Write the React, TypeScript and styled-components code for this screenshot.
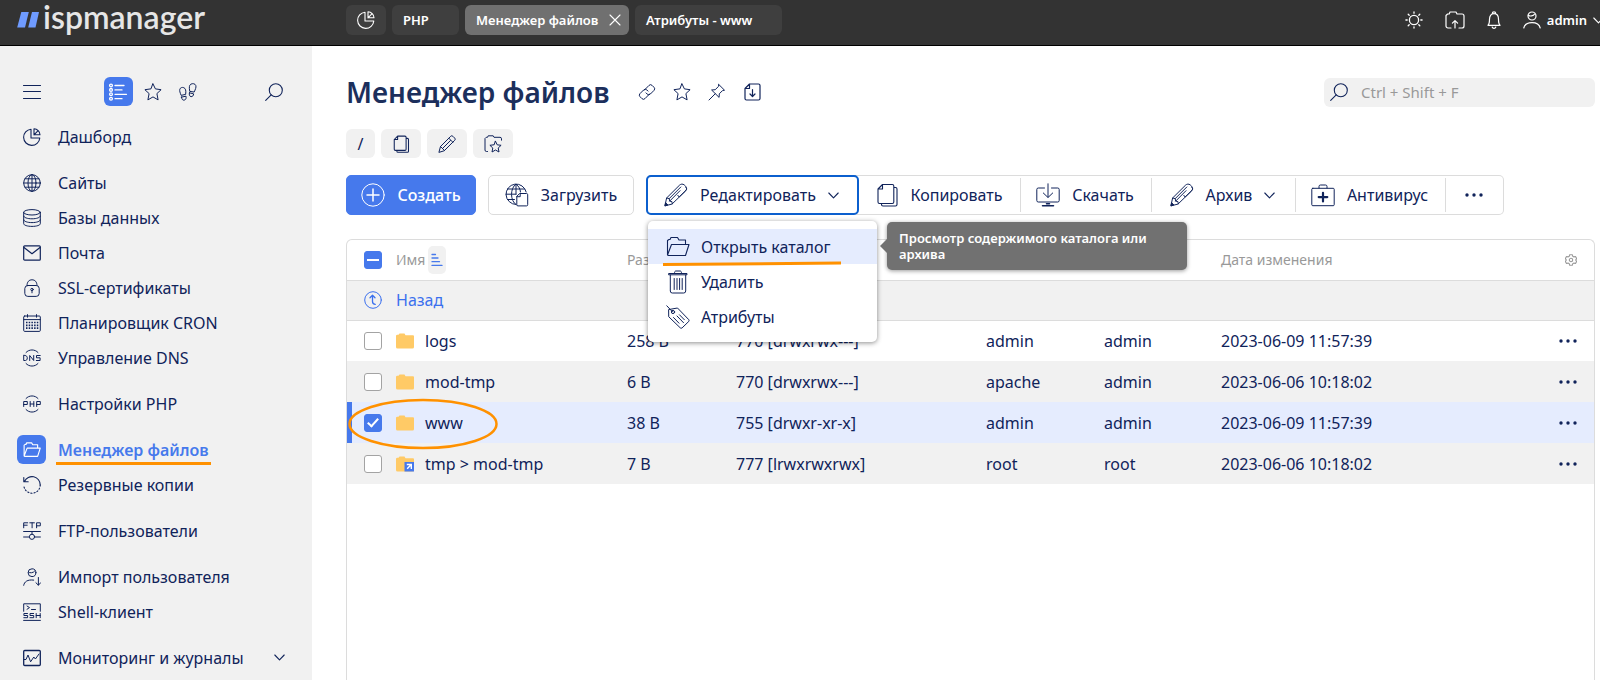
import React, { ReactNode } from "react";
import styled, { createGlobalStyle, css } from "styled-components";

const navy = "#10235a";
const blue = "#4679ec";
const orange = "#ff9100";
const line = "#dcdcdc";
const soft = "#f1f1f1";
const pale = "#e5ecfe";

const GlobalStyle = createGlobalStyle`
  *, *::before, *::after { box-sizing: border-box; }
  body {
    margin: 0;
    background: #fff;
    color: ${navy};
    font-family: "Noto Sans", "Open Sans", sans-serif;
    font-size: 16px;
    line-height: 20px;
  }
  button, input { font: inherit; color: inherit; }
  button { cursor: pointer; }
  a { color: inherit; text-decoration: none; }
  svg { display: block; flex: none; }
`;

/* ---------- icons ---------- */

type IconProps = { w?: number; h?: number; box?: string; sw?: number; children: ReactNode };

const Icon = ({ w = 18, h = 18, box, sw = 1, children }: IconProps) => (
  <svg
    width={w}
    height={h}
    viewBox={box ?? `0 0 ${w} ${h}`}
    fill="none"
    stroke="currentColor"
    strokeWidth={sw}
    strokeLinecap="round"
    strokeLinejoin="round"
    aria-hidden="true"
  >
    {children}
  </svg>
);

const PieIcon = () => (
  <Icon sw={1.1}>
    <path d="M8 1.2A8.1 8.1 0 1 0 16.8 10H8Z" />
    <path d="M11 .8v6h6A6.1 6.1 0 0 0 11 .8ZM11 6.8l3.6-3.6" />
  </Icon>
);
const CloseIcon = () => (
  <Icon w={12} h={12} sw={1.1}>
    <path d="M1 1l10 10M11 1L1 11" />
  </Icon>
);
const SunIcon = () => (
  <Icon sw={1.3}>
    <circle cx="9" cy="9" r="4.6" />
    <path d="M9 .9v1.3M9 15.8v1.3M.9 9h1.3M15.8 9h1.3M3.2 3.2l1 1M13.8 13.8l1 1M3.2 14.8l1-1M13.8 4.2l1-1" />
  </Icon>
);
const FolderUpIcon = () => (
  <Icon w={20} sw={1.2}>
    <path d="M6 17H3a2 2 0 0 1-2-2V4.5L2.6 3h1.6l.8-2h6l1 2h5a2 2 0 0 1 2 2v10a2 2 0 0 1-2 2h-3" />
    <path d="M10 17v-7M7.4 12.2L10 9.6l2.6 2.6" />
  </Icon>
);
const BellIcon = () => (
  <Icon w={14} sw={1.2}>
    <path d="M1 14.3c1.4-1.2 1.5-2.6 1.5-6C2.500 4.600 4.300 2.600 7 2.600s4.500 2 4.500 5.700c0 3.400.1 4.800 1.500 6ZM5.300 2.600a1.700 1.700 0 0 1 3.400 0M5.200 16a1.900 1.900 0 0 0 3.600 0" />
  </Icon>
);
const UserIcon = () => (
  <Icon sw={1.2}>
    <circle cx="9" cy="5" r="4" />
    <path d="M5.400 4.200c1.600 1.400 5 .8 6.200-1.200M.8 17c.8-3.600 4-5.400 8.200-5.400s7.400 1.800 8.200 5.400" />
  </Icon>
);
const MenuIcon = () => (
  <Icon sw={1.1}>
    <path d="M.5 2.500h17M.5 8.500h17M.5 15.500h17" />
  </Icon>
);
const ListIcon = () => (
  <Icon w={20} sw={1.300}>
    <circle cx="3" cy="2.500" r="1.400" />
    <circle cx="3" cy="6.900" r="1.400" />
    <circle cx="3" cy="11.300" r="1.400" />
    <circle cx="3" cy="15.700" r="1.400" />
    <path d="M7 2.500h9M7 6.900h7M7 11.300h11.500M7 15.700h7" />
  </Icon>
);
const StarIcon = () => (
  <Icon>
    <path d="M9 .9l2.400 5 5.700.8-4.200 3.900 1.200 6.300L9 13.900l-5.100 3 1.200-6.300L.9 6.700l5.700-.8Z" />
  </Icon>
);
const StepsIcon = () => (
  <Icon>
    <path d="M2 12C1 9.500.4 8 .8 6.300 1.200 4.700 3.200 4 4.800 4.700c1.900.8 2.300 2.700 1.900 6.300ZM2.500 14.100l4.500-.9c.4 2-.1 3.500-1.700 3.900-1.700.4-2.500-.9-2.800-3Z" />
    <path d="M10.700 8C10 4.500 10.200 2.200 11.800 1.200c1.700-1 4.400-.6 5 1.300.6 1.900-.4 3.700-1.500 6.200ZM10.400 9.800l4.300 1.100c-.4 1.900-1.200 3-2.700 2.700-1.600-.3-2-1.700-1.600-3.800Z" />
  </Icon>
);
const SearchIcon = () => (
  <Icon sw={1.1}>
    <circle cx="10.800" cy="7.200" r="6.500" />
    <path d="M6.200 11.800L.7 17.300" />
  </Icon>
);
const GlobeIcon = () => (
  <Icon>
    <circle cx="9" cy="9" r="8.300" />
    <ellipse cx="9" cy="9" rx="4" ry="8.300" />
    <path d="M.7 9h16.600M2 4.800h14M2 13.200h14M9 .7v16.600" />
  </Icon>
);
const DatabaseIcon = () => (
  <Icon>
    <ellipse cx="9" cy="3.300" rx="8.300" ry="2.700" />
    <path d="M.7 3.300v11.400c0 1.500 3.700 2.700 8.300 2.700s8.300-1.200 8.300-2.700V3.300M.7 7.100c0 1.500 3.700 2.700 8.300 2.700s8.300-1.200 8.300-2.700M.7 10.900c0 1.500 3.700 2.700 8.300 2.700s8.300-1.200 8.300-2.700" />
  </Icon>
);
const MailIcon = () => (
  <Icon sw={1.200}>
    <rect x=".7" y="1.800" width="16.600" height="14.400" rx="1" />
    <path d="M1 3.500l8 6.200 8-6.200" />
  </Icon>
);
const LockIcon = () => (
  <Icon>
    <path d="M4 6.500C4 2.800 6 .8 9 .8s5 2 5 5.700" />
    <rect x="1.800" y="6.500" width="14.400" height="10.900" rx="3" />
    <circle cx="9" cy="10.500" r="1.200" />
    <path d="M9 11.800v2" />
  </Icon>
);
const CalendarIcon = () => (
  <Icon>
    <rect x=".7" y="2" width="16.600" height="15.400" rx="1" />
    <path d="M.7 5.600h16.600M4.500.6v2.600M13.500.6v2.600" />
    <path d="M3 8.500h12.500M3 11.300h12.500M3 14.200h12.500" strokeDasharray="1.500 1.200" strokeWidth="1.700" strokeLinecap="butt" />
  </Icon>
);
const DnsIcon = () => (
  <Icon>
    <path d="M3 3.500C6 0 12 0 15 3.500M3 14.500c3 3.500 9 3.500 12 0" />
    <path d="M.7 6.500v5h1.700c2.600 0 2.600-5 0-5ZM6.700 11.500v-5l4 5v-5M17.200 6.500h-3.700v2.300h3.600v2.700h-3.800" />
  </Icon>
);
const PhpIcon = () => (
  <Icon>
    <path d="M3 3.500C6 0 12 0 15 3.500M3 14.500c3 3.500 9 3.500 12 0" />
    <path d="M.7 11.500v-5h3.600v3H.7M7.200 6.500v5M10.800 6.500v5M7.200 9h3.600M13.700 11.500v-5h3.600v3h-3.600" />
  </Icon>
);
const OpenFolderIcon = ({ w = 18, h = 18, sw = 1.5 }: { w?: number; h?: number; sw?: number }) => (
  <Icon w={w} h={h} box="0 0 24 22" sw={sw}>
    <path d="M1.500 19V4.500l1.500-1h1l1-2h6.500l1.500 2.500h6.500v3.500M1.500 19L5.500 8.500h17.500L19.500 19.500h-17Z" />
  </Icon>
);
const RestoreIcon = () => (
  <Icon sw={1.100}>
    <path d="M1.500 5.500A8.200 8.200 0 0 1 17.200 9M.8 1.500v4.300h4.400" />
    <path d="M17.200 9A8.200 8.200 0 0 1 .8 9" strokeDasharray="1.200 2" />
  </Icon>
);
const FtpIcon = () => (
  <Icon>
    <path d="M.7 5.800v-5h4M.7 3.200h3.500M6.800.8h4.600M9.100.8v5M13.600 5.800v-5h3.700v3h-3.700" />
    <path d="M.6 9.500h16.800M9 9.500v2.600M.6 15h5.800M11.600 15h5.800" />
    <circle cx="9" cy="14.800" r="2.600" />
  </Icon>
);
const UserImportIcon = () => (
  <Icon>
    <circle cx="9" cy="4.700" r="3.900" />
    <path d="M5.400 4.200c1.600 1.200 5 .7 6.200-1M.7 17.300c.6-3.600 3.600-6 10-5.200M15.400 9.500v7.500M12.900 14.700l2.500 2.500 2.300-2.500" />
  </Icon>
);
const SshIcon = () => (
  <Icon>
    <path d="M.7 8.300V.8h16.600v7.500M4 3l2.500 1.600L4 6.300M8.500 6.500h4M.6 17.400h16.800" />
    <path d="M4.500 10.500H.9v2h3.700v2.200H.8M10.600 10.500H7v2h3.700v2.200H6.900M13.200 10.500v4.200M17.200 10.500v4.200M13.200 12.500h4" />
  </Icon>
);
const MonitorIcon = () => (
  <Icon>
    <rect x=".7" y="1.500" width="16.600" height="15" rx="1" strokeWidth="1.300" />
    <path d="M1 10.500h2L5 6l2.600 6.800L10.800 8l1.600 2L16 5" />
  </Icon>
);
const ChevronIcon = ({ box = "0 0 11 7", w = 11 }: { box?: string; w?: number }) => (
  <Icon w={w} h={7} box={box} sw={1.1}>
    <path d="M.8 1l4.700 4.800L10.200 1" />
  </Icon>
);
const LinkIcon = () => (
  <Icon>
    <path d="M6.200 7.300L11 2.400a2.200 2.200 0 0 1 3.100 0l1.900 1.900a2.200 2.200 0 0 1 0 3.100l-3.700 3.700a2.200 2.200 0 0 1-3.100 0L8 9.900" />
    <path d="M11.800 10.700L7 15.600a2.200 2.200 0 0 1-3.100 0L2 13.700a2.200 2.200 0 0 1 0-3.100l3.700-3.700a2.200 2.200 0 0 1 3.100 0L10 8.100" />
  </Icon>
);
const PinIcon = () => (
  <Icon>
    <path d="M10.800 1.500l5.700 5.700-2 .4-3.200 3.200-.2 3.600L3.600 7l3.600-.3 3.200-3.200ZM7.200 10.800L1 17" />
  </Icon>
);
const FileDownIcon = () => (
  <Icon sw={1.200}>
    <path d="M6.500 1h9A1.500 1.500 0 0 1 17 2.500v13a1.500 1.500 0 0 1-1.500 1.500h-12A1.500 1.500 0 0 1 2 15.500v-10ZM6.500 1v4.500H2M9.500 6.500v7M7 11l2.500 2.500L12 11" />
  </Icon>
);
const CopyIcon = ({ w = 18, h = 18 }: { w?: number; h?: number }) => (
  <Icon w={w} h={h} box="0 0 24 24" sw={w > 20 ? 1.1 : 1.4}>
    <path d="M7.500 1.500h9.800a1.500 1.500 0 0 1 1.500 1.500v16a1.500 1.500 0 0 1-1.500 1.500H4.500A1.500 1.500 0 0 1 3 19V6ZM7.500 1.500V6H3M19 4.500h1.500A1.500 1.500 0 0 1 22 6v15.500a1.500 1.500 0 0 1-1.500 1.500H8a1.500 1.500 0 0 1-1.500-1.500V21" />
  </Icon>
);
const PencilIcon = () => (
  <Icon>
    <path d="M1 17l1.500-5.500L12.700 1.300a1.500 1.500 0 0 1 2.200 0l1.800 1.800a1.500 1.500 0 0 1 0 2.200L6.500 15.500ZM2.500 11.500l4 4M10.800 3.200l4 4M12.500 5.500L5 13" />
  </Icon>
);
const FolderStarIcon = () => (
  <Icon>
    <path d="M3.500 16.500h-1A1.500 1.500 0 0 1 1 15V3.500L2.200 2.300h1.300L4.200.8h5l.8 1.500h6a1.500 1.500 0 0 1 1.500 1.500v1.400" />
    <path d="M11.500 6.300l1.700 3.500 3.900.5-2.900 2.700.8 4-3.500-2-3.500 2 .8-4-2.900-2.700 3.900-.5Z" />
  </Icon>
);
const PlusIcon = () => (
  <Icon w={24} h={24}>
    <circle cx="12" cy="12" r="11.200" />
    <path d="M12 6v12M6 12h12" strokeWidth="1.500" />
  </Icon>
);
const UploadGlobeIcon = () => (
  <Icon w={24} h={24}>
    <path d="M11 21.500A10.200 10.200 0 1 1 21.200 9M11 1.200v10M11 21.500C5 18 5 5 11 1.200c2.800 2 4.300 4.800 4.500 7.800M1 11.200h10M2.500 6h17M2.500 16.500H9.500" />
    <path d="M15 10.500h6.500a1.200 1.200 0 0 1 1.200 1.200v10a1.200 1.200 0 0 1-1.200 1.200h-8.500a1.200 1.200 0 0 1-1.200-1.200V13.700ZM15.200 10.500v3.200h-3.400" />
  </Icon>
);
const PenIcon = () => (
  <Icon w={24} h={24}>
    <path d="M1 22.500L2.600 15 15.500 2.200c1.300-1.300 3.300-1.500 4.700-.3l1.400 1.300c1.400 1.500 1.200 3.400 0 4.700L8.300 20.800ZM2.600 15l2.600.6.500 2.500 2.200.5.400 2.200M5.200 15.600L16.800 4M5.700 18.100L16 7.700M13.800 12.300l1.400 1.700L22 7.300c1-1 .8-2-.2-2.900" />
    <path d="M1 22.500l.6-2.800 2 2Z" fill="currentColor" />
  </Icon>
);
const DownloadIcon = () => (
  <Icon w={24} h={24}>
    <path d="M8.500 5H2.300A1.500 1.500 0 0 0 .8 6.500v11A1.500 1.500 0 0 0 2.300 19h19.400a1.500 1.500 0 0 0 1.500-1.500v-11A1.500 1.500 0 0 0 21.700 5h-6.200M12 .8V14M7.300 10l4.700 4.500L16.700 10" />
    <path d="M6.500 22.800h11M10.500 20.800h3" strokeWidth="1.500" />
  </Icon>
);
const MedkitIcon = () => (
  <Icon w={24} h={24}>
    <path d="M8 5V3.500A1.500 1.500 0 0 1 9.500 2h5A1.500 1.500 0 0 1 16 3.500V5" />
    <rect x=".8" y="5.300" width="22.400" height="17.400" rx="1" />
    <path d="M12 9.800v8.600M7.700 14.100h8.600" strokeWidth="2.200" />
  </Icon>
);
const DotsIcon = () => (
  <svg width="18" height="4" viewBox="0 0 18 4" fill="currentColor" aria-hidden="true">
    <circle cx="2" cy="2" r="1.700" />
    <circle cx="9" cy="2" r="1.700" />
    <circle cx="16" cy="2" r="1.700" />
  </svg>
);
const TrashIcon = () => (
  <Icon w={24} h={24}>
    <path d="M3 4.800h18v-1.300H3ZM8.500 3.300C8.500 1.500 9 1 10 1h4c1 0 1.500.5 1.500 2.300M4.300 5v16a2 2 0 0 0 2 2h11.400a2 2 0 0 0 2-2V5M8.200 8.500v11M11 8.500v11M13.600 8.500v11M16.200 8.500v11" />
  </Icon>
);
const TagIcon = () => (
  <Icon w={24} h={24}>
    <path d="M3 4.500L11.500 3 22.800 14.700a1.500 1.500 0 0 1 0 1.700l-6.700 6.500a1.500 1.500 0 0 1-1.800 0L3 12ZM.8.800l5.700 6" />
    <circle cx="7" cy="7" r="1.600" />
    <path d="M7.500 12.500l5.500 5.700M11 11l6.500 6.700M13.500 9.800l4.800 4.900" />
  </Icon>
);
const SortIcon = () => (
  <Icon w={12} h={14} sw={1.300}>
    <path d="M1 1.500h3.500M1 5h6M1 8.700h7.500M1 12.400h10" />
  </Icon>
);
const GearIcon = () => (
  <Icon w={12} h={12} sw={1.100}>
    <path d="M4.700.7h2.600l.4 1.500 1.300.7 1.500-.4 1.200 2.200L10.600 6l1.100 1.300-1.200 2.200-1.500-.4-1.300.7-.4 1.500H4.700l-.4-1.500L3 9.100l-1.500.4L.3 7.300 1.400 6 .3 4.700l1.200-2.200 1.500.4 1.300-.7Z" />
    <circle cx="6" cy="6" r="1.700" />
  </Icon>
);
const BackIcon = () => (
  <Icon>
    <circle cx="9" cy="9" r="8.300" />
    <path d="M6 6.700l2.500-2.500L11 6.700M8.500 4.500v6c0 2 .8 2.800 2.800 2.800" strokeWidth="1.300" />
  </Icon>
);
const FolderIcon = ({ shortcut }: { shortcut?: boolean }) => (
  <svg width="18" height="16" viewBox="0 0 18 16" aria-hidden="true">
    <path d="M0 2.500L1 1.800h1.500L3.500.5h5l1 1.800H17a1 1 0 0 1 1 1V14a1.500 1.500 0 0 1-1.500 1.500h-15A1.500 1.500 0 0 1 0 14Z" fill="#ffca66" />
    {shortcut && (
      <>
        <path d="M8.500 6H18v9.500H8.500Z" fill={blue} />
        <path d="M10.800 8.500h4.500V13M15 8.800l-3.800 4" fill="none" stroke="#fff" strokeWidth="1.400" />
      </>
    )}
  </svg>
);
const LogoMark = () => (
  <svg width="22" height="16" viewBox="0 0 22 16" fill="#6f9bff" aria-hidden="true">
    <path d="M4.300 0h7.500L8 15.500H.200Z" />
    <path d="M15 0h7l-3.500 15.500h-7.300Z" />
  </svg>
);

/* ---------- header ---------- */

const Page = styled.div`
  display: flex;
  flex-direction: column;
  min-height: 100vh;
`;

const Header = styled.header`
  display: flex;
  align-items: flex-start;
  height: 46px;
  padding-top: 5px;
  background: #333;
  border-bottom: 1px solid #000;
  color: #fff;
`;

const Logo = styled.a`
  display: flex;
  align-items: center;
  gap: 4px;
  width: 346px;
  height: 30px;
  padding-left: 17px;
  color: #e6e6e6;
  font-family: Lato, sans-serif;
  font-size: 32px;
  font-weight: 600;
  line-height: 30px;
`;

const LogoText = styled.span`
  padding-bottom: 6px;
`;

const Tabs = styled.nav`
  display: flex;
  gap: 6px;
`;

const Tab = styled.div<{ $active?: boolean; $w: number }>`
  display: flex;
  align-items: center;
  justify-content: space-between;
  width: ${(p) => p.$w}px;
  height: 30px;
  padding: 0 8px 0 11px;
  border-radius: 6px;
  background: ${(p) => (p.$active ? "#707070" : "#3f3f3f")};
  font-size: 13px;
  font-weight: 600;
  white-space: nowrap;
`;

const BareButton = styled.button`
  display: flex;
  align-items: center;
  justify-content: center;
  padding: 0;
  border: 0;
  background: none;
`;

const HeaderTools = styled.div`
  display: flex;
  align-items: center;
  gap: 22px;
  height: 30px;
  margin-left: auto;
`;

const UserButton = styled(BareButton)`
  gap: 6px;
  font-size: 13px;
  font-weight: 600;
`;

/* ---------- sidebar ---------- */

const Body = styled.div`
  display: flex;
  flex: 1;
`;

const Sidebar = styled.aside`
  flex: none;
  width: 312px;
  padding: 31px 17px 0;
  background: ${soft};
`;

const SideTools = styled.div`
  display: flex;
  align-items: center;
  justify-content: space-between;
  height: 29px;
  padding: 0 12px 0 6px;
`;

const SideModes = styled.div`
  display: flex;
  align-items: center;
  gap: 6px;
`;

const ModeButton = styled(BareButton)<{ $on?: boolean }>`
  width: 29px;
  height: 29px;
  border-radius: 6px;
  ${(p) => p.$on && css`background: ${blue}; color: #fff;`}
`;

const Menu = styled.nav`
  display: flex;
  flex-direction: column;
  gap: 11px;
  padding-top: 13px;
`;

const MenuGroup = styled.div`
  display: flex;
  flex-direction: column;
`;

const MenuLink = styled.a<{ $active?: boolean }>`
  display: flex;
  align-items: center;
  gap: 12px;
  height: 35px;
  padding-right: 10px;
  white-space: nowrap;
  ${(p) => p.$active && css`color: ${blue}; font-weight: 600;`}
`;

const MenuIconBox = styled.span<{ $active?: boolean }>`
  display: flex;
  align-items: center;
  justify-content: center;
  width: 29px;
  height: 29px;
  border-radius: 6px;
  ${(p) => p.$active && css`background: ${blue}; color: #fff;`}
`;

const MenuLabel = styled.span<{ $marked?: boolean }>`
  position: relative;
  margin-right: auto;
  ${(p) => p.$marked && css`
    &::after {
      content: "";
      position: absolute;
      left: -2px;
      right: -2px;
      bottom: -5px;
      height: 3px;
      background: ${orange};
    }
  `}
`;

/* ---------- content ---------- */

const Main = styled.main`
  display: flex;
  flex: 1;
  flex-direction: column;
  min-width: 0;
  padding: 26px 5px 0 34px;
`;

const TitleRow = styled.div`
  display: flex;
  align-items: center;
  height: 40px;
`;

const Title = styled.h1`
  margin: 0;
  color: #1c2f5c;
  font-size: 28px;
  line-height: 40px;
  font-weight: 600;
`;

const TitleTools = styled.div`
  display: flex;
  gap: 17px;
  padding-left: 28px;
`;

const SearchBox = styled.label`
  display: flex;
  align-items: center;
  gap: 13px;
  width: 271px;
  height: 29px;
  margin-left: auto;
  padding: 0 6px;
  border-radius: 6px;
  background: ${soft};
`;

const SearchInput = styled.input`
  flex: 1;
  min-width: 0;
  padding: 0;
  border: 0;
  outline: 0;
  background: none;
  font-size: 15px;
  &::placeholder { color: #999; opacity: 1; }
`;

const Crumbs = styled.nav`
  display: flex;
  gap: 6px;
  margin-top: 17px;
`;

const Crumb = styled.button<{ $narrow?: boolean }>`
  display: flex;
  align-items: center;
  justify-content: center;
  width: ${(p) => (p.$narrow ? 29 : 40)}px;
  height: 29px;
  padding: 0;
  border: 0;
  border-radius: 6px;
  background: ${soft};
`;

const Toolbar = styled.div`
  display: flex;
  gap: 12px;
  height: 40px;
  margin-top: 17px;
`;

const ActionButton = styled.button<{ $primary?: boolean; $w: number }>`
  display: flex;
  align-items: center;
  justify-content: center;
  gap: 12px;
  width: ${(p) => p.$w}px;
  padding: 0;
  border: 1px solid ${(p) => (p.$primary ? blue : line)};
  border-radius: 5px;
  background: ${(p) => (p.$primary ? blue : "#fff")};
  color: ${(p) => (p.$primary ? "#fff" : navy)};
  font-weight: ${(p) => (p.$primary ? 500 : 400)};
  white-space: nowrap;
`;

const ButtonGroup = styled.div`
  display: flex;
  border: 1px solid ${line};
  border-left: 0;
  border-radius: 5px;
`;

const GroupItem = styled.div<{ $w: number }>`
  position: relative;
  display: flex;
  width: ${(p) => p.$w}px;
  padding: 3px 0;
  & + & + & { border-image: linear-gradient(transparent 3px, ${line} 3px, ${line} 35px, transparent 35px) 1; border-left: 1px solid; }
`;

const GroupButton = styled(BareButton)`
  flex: 1;
  gap: 12px;
  padding-right: 2px;
  white-space: nowrap;
`;

const FocusedButton = styled(GroupButton)`
  margin: -4px 0;
  border: 2px solid #0b5fce;
  border-radius: 5px;
  background: #fff;
`;

const Dropdown = styled.div`
  position: absolute;
  z-index: 2;
  top: 45px;
  left: 2px;
  width: 229px;
  padding: 8px 0;
  border-radius: 5px;
  background: #fff;
  box-shadow: 0 1px 5px rgba(0, 0, 0, 0.45);
`;

const DropdownItem = styled.button<{ $hover?: boolean }>`
  position: relative;
  display: flex;
  align-items: center;
  gap: 11px;
  width: 100%;
  height: 35px;
  padding: 0 18px;
  border: 0;
  background: ${(p) => (p.$hover ? pale : "none")};
  white-space: nowrap;
`;

const MenuMark = styled.svg`
  position: absolute;
  left: 15px;
  bottom: -2px;
`;

const Tooltip = styled.div`
  position: absolute;
  z-index: 3;
  top: 46px;
  left: 241px;
  width: 300px;
  padding: 8px 12px;
  border-radius: 5px;
  background: #717171;
  box-shadow: 0 1px 4px rgba(0, 0, 0, 0.4);
  color: #fff;
  font-size: 13px;
  font-weight: 600;
  line-height: 16px;
  &::before {
    content: "";
    position: absolute;
    top: 17px;
    left: -7px;
    border: solid transparent;
    border-width: 7px 7px 7px 0;
    border-right-color: #717171;
  }
`;

/* ---------- table ---------- */

const TableBox = styled.section`
  flex: 1;
  margin-top: 24px;
  border: 1px solid ${line};
  border-bottom: 0;
  border-radius: 6px 6px 0 0;
`;

const Table = styled.table`
  width: 100%;
  border-collapse: collapse;
  table-layout: fixed;
`;

const Th = styled.th<{ $w?: number }>`
  ${(p) => p.$w && css`width: ${p.$w}px;`}
  height: 40px;
  padding: 0;
  border-bottom: 1px solid ${line};
  color: #999;
  font-size: 14px;
  font-weight: 400;
  text-align: left;
`;

const Row = styled.tr<{ $tone?: "grey" | "selected" | "back" }>`
  height: 41px;
  background: ${(p) => (p.$tone === "selected" ? pale : p.$tone ? soft : "#fff")};
  ${(p) => p.$tone === "back" && css`height: 40px; border-bottom: 1px solid ${line};`}
  ${(p) => p.$tone === "selected" && css`box-shadow: inset 5px 0 ${blue};`}
`;

const Td = styled.td`
  position: relative;
  padding: 0;
  white-space: nowrap;
`;

const Flexed = styled.div<{ $gap?: number }>`
  display: flex;
  align-items: center;
  gap: ${(p) => p.$gap ?? 0}px;
`;

const BackLink = styled.a`
  color: #3b70ee;
`;

const BackMark = styled.a`
  display: block;
  padding-left: 17px;
  color: #3b70ee;
`;

const Check = styled.input`
  display: block;
  position: relative;
  appearance: none;
  width: 18px;
  height: 18px;
  margin: 0 0 0 17px;
  border: 1px solid #a3a3a3;
  border-radius: 3px;
  background: #fff;
  &:checked, &[data-partial] { border-color: ${blue}; background: ${blue}; }
  &:checked::after {
    content: "";
    position: absolute;
    top: 1px;
    left: 5px;
    width: 6px;
    height: 11px;
    border: solid #fff;
    border-width: 0 2px 2px 0;
    transform: rotate(42deg);
  }
  &[data-partial]::after {
    content: "";
    position: absolute;
    top: 7px;
    left: 2px;
    width: 12px;
    height: 2px;
    background: #fff;
  }
`;

const SortButton = styled(BareButton)`
  width: 18px;
  height: 28px;
  border-radius: 5px;
  background: ${soft};
  color: ${blue};
`;

const GearButton = styled(BareButton)`
  margin-left: 17px;
  color: #999;
`;

const RowButton = styled(BareButton)`
  width: 18px;
  height: 20px;
  margin-left: 11px;
`;

const Ring = styled.svg`
  position: absolute;
  z-index: 1;
  top: -4px;
  left: 1px;
`;

/* ---------- data ---------- */

type MenuEntry = { label: string; icon: ReactNode; active?: boolean; more?: boolean };

const menu: MenuEntry[][] = [
  [{ label: "Дашборд", icon: <PieIcon /> }],
  [
    { label: "Сайты", icon: <GlobeIcon /> },
    { label: "Базы данных", icon: <DatabaseIcon /> },
    { label: "Почта", icon: <MailIcon /> },
    { label: "SSL-сертификаты", icon: <LockIcon /> },
    { label: "Планировщик CRON", icon: <CalendarIcon /> },
    { label: "Управление DNS", icon: <DnsIcon /> },
  ],
  [{ label: "Настройки PHP", icon: <PhpIcon /> }],
  [
    { label: "Менеджер файлов", icon: <OpenFolderIcon />, active: true },
    { label: "Резервные копии", icon: <RestoreIcon /> },
  ],
  [{ label: "FTP-пользователи", icon: <FtpIcon /> }],
  [
    { label: "Импорт пользователя", icon: <UserImportIcon /> },
    { label: "Shell-клиент", icon: <SshIcon /> },
  ],
  [{ label: "Мониторинг и журналы", icon: <MonitorIcon />, more: true }],
];

type FileEntry = {
  name: string;
  size: string;
  rights: string;
  owner: string;
  group: string;
  date: string;
  tone?: "grey" | "selected";
  shortcut?: boolean;
};

const files: FileEntry[] = [
  { name: "logs", size: "258 B", rights: "770 [drwxrwx---]", owner: "admin", group: "admin", date: "2023-06-09 11:57:39" },
  { name: "mod-tmp", size: "6 B", rights: "770 [drwxrwx---]", owner: "apache", group: "admin", date: "2023-06-06 10:18:02", tone: "grey" },
  { name: "www", size: "38 B", rights: "755 [drwxr-xr-x]", owner: "admin", group: "admin", date: "2023-06-09 11:57:39", tone: "selected" },
  { name: "tmp > mod-tmp", size: "7 B", rights: "777 [lrwxrwxrwx]", owner: "root", group: "root", date: "2023-06-06 10:18:02", tone: "grey", shortcut: true },
];

const TopBar = () => (
  <Header>
    <Logo href="#">
      <LogoMark />
      <LogoText>ispmanager</LogoText>
    </Logo>
    <Tabs>
      <Tab $w={40}><PieIcon /></Tab>
      <Tab $w={67}><a href="#">PHP</a></Tab>
      <Tab $w={164} $active>
        <a href="#">Менеджер файлов</a>
        <BareButton aria-label="Закрыть"><CloseIcon /></BareButton>
      </Tab>
      <Tab $w={147}><a href="#">Атрибуты - www</a></Tab>
    </Tabs>
    <HeaderTools>
      <BareButton aria-label="Тема"><SunIcon /></BareButton>
      <BareButton aria-label="Файлы"><FolderUpIcon /></BareButton>
      <BareButton aria-label="Уведомления"><BellIcon /></BareButton>
      <UserButton><UserIcon />admin<ChevronIcon w={7} box="0 0 7 7" /></UserButton>
    </HeaderTools>
  </Header>
);

const SideBar = () => (
  <Sidebar>
    <SideTools>
      <BareButton aria-label="Меню"><MenuIcon /></BareButton>
      <SideModes>
        <ModeButton $on aria-label="Список"><ListIcon /></ModeButton>
        <ModeButton aria-label="Избранное"><StarIcon /></ModeButton>
        <ModeButton aria-label="История"><StepsIcon /></ModeButton>
      </SideModes>
      <BareButton aria-label="Поиск"><SearchIcon /></BareButton>
    </SideTools>
    <Menu>
      {menu.map((group) => (
        <MenuGroup key={group[0].label}>
          {group.map((m) => (
            <MenuLink key={m.label} href="#" $active={m.active}>
              <MenuIconBox $active={m.active}>{m.icon}</MenuIconBox>
              <MenuLabel $marked={m.active}>{m.label}</MenuLabel>
              {m.more && <ChevronIcon />}
            </MenuLink>
          ))}
        </MenuGroup>
      ))}
    </Menu>
  </Sidebar>
);

const Actions = () => (
  <Toolbar>
    <ActionButton $primary $w={130}><PlusIcon />Создать</ActionButton>
    <ActionButton $w={146}><UploadGlobeIcon />Загрузить</ActionButton>
    <ButtonGroup>
      <GroupItem $w={213}>
        <FocusedButton><PenIcon />Редактировать<ChevronIcon /></FocusedButton>
        <Dropdown>
          <DropdownItem $hover>
            <OpenFolderIcon w={24} h={22} sw={1.1} />Открыть каталог
            <MenuMark width="180" height="5" viewBox="0 0 180 5" aria-hidden="true">
              <path d="M0 3.500L178 2" stroke={orange} strokeWidth="3" />
            </MenuMark>
          </DropdownItem>
          <DropdownItem><TrashIcon />Удалить</DropdownItem>
          <DropdownItem><TagIcon />Атрибуты</DropdownItem>
        </Dropdown>
        <Tooltip role="tooltip">Просмотр содержимого каталога или архива</Tooltip>
      </GroupItem>
      <GroupItem $w={161}><GroupButton><CopyIcon w={24} h={24} />Копировать</GroupButton></GroupItem>
      <GroupItem $w={131}><GroupButton><DownloadIcon />Скачать</GroupButton></GroupItem>
      <GroupItem $w={144}><GroupButton><PenIcon />Архив<ChevronIcon /></GroupButton></GroupItem>
      <GroupItem $w={150}><GroupButton><MedkitIcon />Антивирус</GroupButton></GroupItem>
      <GroupItem $w={58}><GroupButton aria-label="Ещё"><DotsIcon /></GroupButton></GroupItem>
    </ButtonGroup>
  </Toolbar>
);

const FileTable = () => (
  <TableBox>
    <Table>
      <thead>
        <tr>
          <Th $w={49}><Check type="checkbox" data-partial aria-label="Выбрать все" /></Th>
          <Th $w={231}>
            <Flexed $gap={3}>Имя<SortButton aria-label="Сортировка"><SortIcon /></SortButton></Flexed>
          </Th>
          <Th $w={109}>Размер</Th>
          <Th $w={250} aria-label="Права" />
          <Th $w={118} aria-label="Владелец" />
          <Th $w={117} aria-label="Группа" />
          <Th>Дата изменения</Th>
          <Th $w={46}><GearButton aria-label="Настройки"><GearIcon /></GearButton></Th>
        </tr>
      </thead>
      <tbody>
        <Row $tone="back">
          <Td><BackMark href="#" aria-label="Вверх"><BackIcon /></BackMark></Td>
          <Td colSpan={7}><BackLink href="#">Назад</BackLink></Td>
        </Row>
        {files.map((f) => (
          <Row key={f.name} $tone={f.tone}>
            <Td>
              <Check type="checkbox" defaultChecked={f.tone === "selected"} aria-label={f.name} />
              {f.tone === "selected" && (
                <Ring width="152" height="52" viewBox="0 0 152 52" aria-hidden="true">
                  <ellipse cx="75" cy="26" rx="73.500" ry="24" fill="none" stroke={orange} strokeWidth="2.500" />
                </Ring>
              )}
            </Td>
            <Td><Flexed $gap={11}><FolderIcon shortcut={f.shortcut} />{f.name}</Flexed></Td>
            <Td>{f.size}</Td>
            <Td>{f.rights}</Td>
            <Td>{f.owner}</Td>
            <Td>{f.group}</Td>
            <Td>{f.date}</Td>
            <Td><RowButton aria-label="Действия"><DotsIcon /></RowButton></Td>
          </Row>
        ))}
      </tbody>
    </Table>
  </TableBox>
);

export default function App() {
  return (
    <Page>
      <GlobalStyle />
      <TopBar />
      <Body>
        <SideBar />
        <Main>
          <TitleRow>
            <Title>Менеджер файлов</Title>
            <TitleTools>
              <BareButton aria-label="Ссылка"><LinkIcon /></BareButton>
              <BareButton aria-label="В избранное"><StarIcon /></BareButton>
              <BareButton aria-label="Закрепить"><PinIcon /></BareButton>
              <BareButton aria-label="Экспорт"><FileDownIcon /></BareButton>
            </TitleTools>
            <SearchBox>
              <SearchIcon />
              <SearchInput type="text" placeholder="Ctrl + Shift + F" aria-label="Поиск по таблице" />
            </SearchBox>
          </TitleRow>
          <Crumbs>
            <Crumb $narrow>/</Crumb>
            <Crumb aria-label="Копировать путь"><CopyIcon /></Crumb>
            <Crumb aria-label="Изменить путь"><PencilIcon /></Crumb>
            <Crumb aria-label="Избранные каталоги"><FolderStarIcon /></Crumb>
          </Crumbs>
          <Actions />
          <FileTable />
        </Main>
      </Body>
    </Page>
  );
}
